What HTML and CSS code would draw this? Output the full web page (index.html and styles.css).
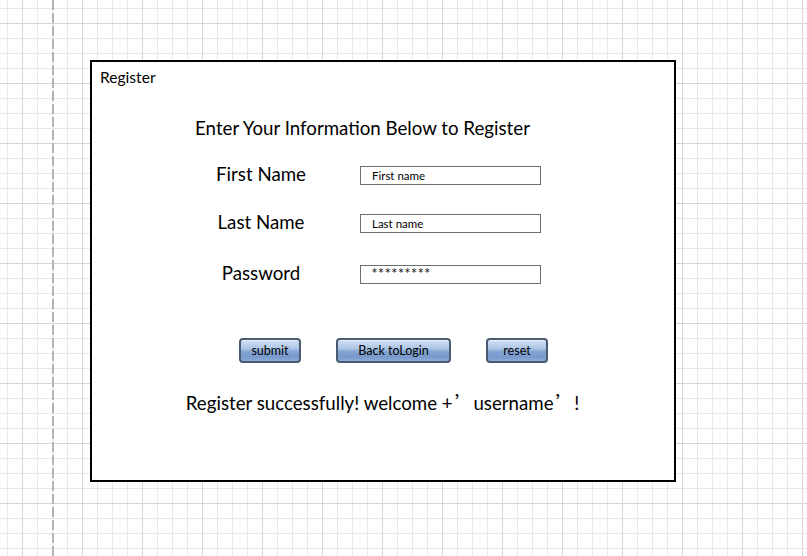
FILE: index.html
```html
<!DOCTYPE html>
<html>
<head>
<meta charset="utf-8">
<link rel="stylesheet" href="styles.css">
</head>
<body>
<div class="canvas">
  <div class="frame">
    <div class="title">Register</div>
    <div class="heading">Enter Your Information Below to Register</div>
    <div class="form">
      <div class="row row1">
        <label class="label">First Name</label>
        <input class="field" type="text" value="First name">
      </div>
      <div class="row row2">
        <label class="label">Last Name</label>
        <input class="field" type="text" value="Last name">
      </div>
      <div class="row row3">
        <label class="label">Password</label>
        <input class="field pw" type="text" value="*********">
      </div>
    </div>
    <div class="buttons">
      <button class="btn btn-submit">submit</button>
      <button class="btn btn-back">Back toLogin</button>
      <button class="btn btn-reset">reset</button>
    </div>
    <div class="success">Register successfully! welcome +<span class="cjk">’</span>username<span class="cjk">’</span>!</div>
  </div>
</div>
</body>
</html>
```
FILE: styles.css
```css
html, body {
  margin: 0;
  padding: 0;
}
body {
  width: 807px;
  height: 556px;
  overflow: hidden;
  background-color: #fff;
  background-image:
    repeating-linear-gradient(to bottom, #b4b4b4 0, #b4b4b4 10px, transparent 10px, transparent 13px),
    linear-gradient(to right, #d6d6d6 1px, transparent 1px),
    linear-gradient(to bottom, #d6d6d6 1px, transparent 1px),
    linear-gradient(to right, #e8e8e8 1px, transparent 1px),
    linear-gradient(to bottom, #e8e8e8 1px, transparent 1px);
  background-size:
    2px 100%,
    60px 60px,
    60px 60px,
    15px 15px,
    15px 15px;
  background-position:
    52px 0,
    22px 23px,
    22px 23px,
    7px 8px,
    7px 8px;
  background-repeat:
    no-repeat,
    repeat,
    repeat,
    repeat,
    repeat;
  font-family: Lato, "Open Sans", sans-serif;
  color: #000;
}
.canvas {
  padding: 60px 0 0 90px;
}
.frame {
  box-sizing: border-box;
  width: 586px;
  height: 422px;
  border: 2px solid #000;
  background: #fff;
  padding: 6px 0 0 8px;
}
.title {
  font-size: 15.6px;
  line-height: 18px;
  height: 18px;
}
.heading {
  margin: 30px 0 0 95px;
  width: 335px;
  text-align: center;
  white-space: nowrap;
  font-size: 18.7px;
  line-height: 24px;
}
.form {
  margin-left: 101px;
}
.row {
  display: flex;
  align-items: center;
  height: 19px;
}
.row1 { margin-top: 26px; }
.row2 { margin-top: 29px; }
.row3 { margin-top: 32px; }
.label {
  width: 120px;
  text-align: center;
  font-size: 18.7px;
  line-height: 24px;
  padding-bottom: 3px;
  white-space: nowrap;
}
.field {
  box-sizing: border-box;
  margin: 0 0 0 39px;
  width: 181px;
  height: 19px;
  border: 1px solid #6e6e6e;
  padding: 0 0 1px 11px;
  font-family: Lato, "Open Sans", sans-serif;
  font-size: 11.5px;
  color: #000;
  background: #fff;
  outline: none;
}
.pw {
  padding: 0 0 5px 11px;
  font-family: "DejaVu Sans", sans-serif;
  font-size: 10px;
  letter-spacing: 1.6px;
}
.buttons {
  display: flex;
  margin: 54px 0 0 139px;
  height: 25px;
}
.btn {
  box-sizing: border-box;
  height: 25px;
  padding: 0 0 1px 0;
  border: 2px solid #4a5a70;
  border-radius: 4px;
  background: linear-gradient(to bottom, #d0e0f3 0%, #adc6e6 40%, #84a5d3 55%, #7899cc 80%, #8cabd8 100%);
  box-shadow: inset 0 1px 0 rgba(255,255,255,0.6);
  font-family: Lato, "Open Sans", sans-serif;
  font-size: 12.5px;
  color: #000;
}
.btn-submit { width: 62px; }
.btn-back { width: 115px; margin-left: 35px; }
.btn-reset { width: 62px; margin-left: 35px; }
.success {
  margin: 27px 0 0 85px;
  width: 395px;
  text-align: center;
  white-space: nowrap;
  font-size: 18.7px;
  line-height: 24px;
}
.cjk {
  font-family: "Noto Sans CJK SC", sans-serif;
  display: inline-block;
  width: 1em;
  text-align: left;
  margin-left: 2px;
}
```
